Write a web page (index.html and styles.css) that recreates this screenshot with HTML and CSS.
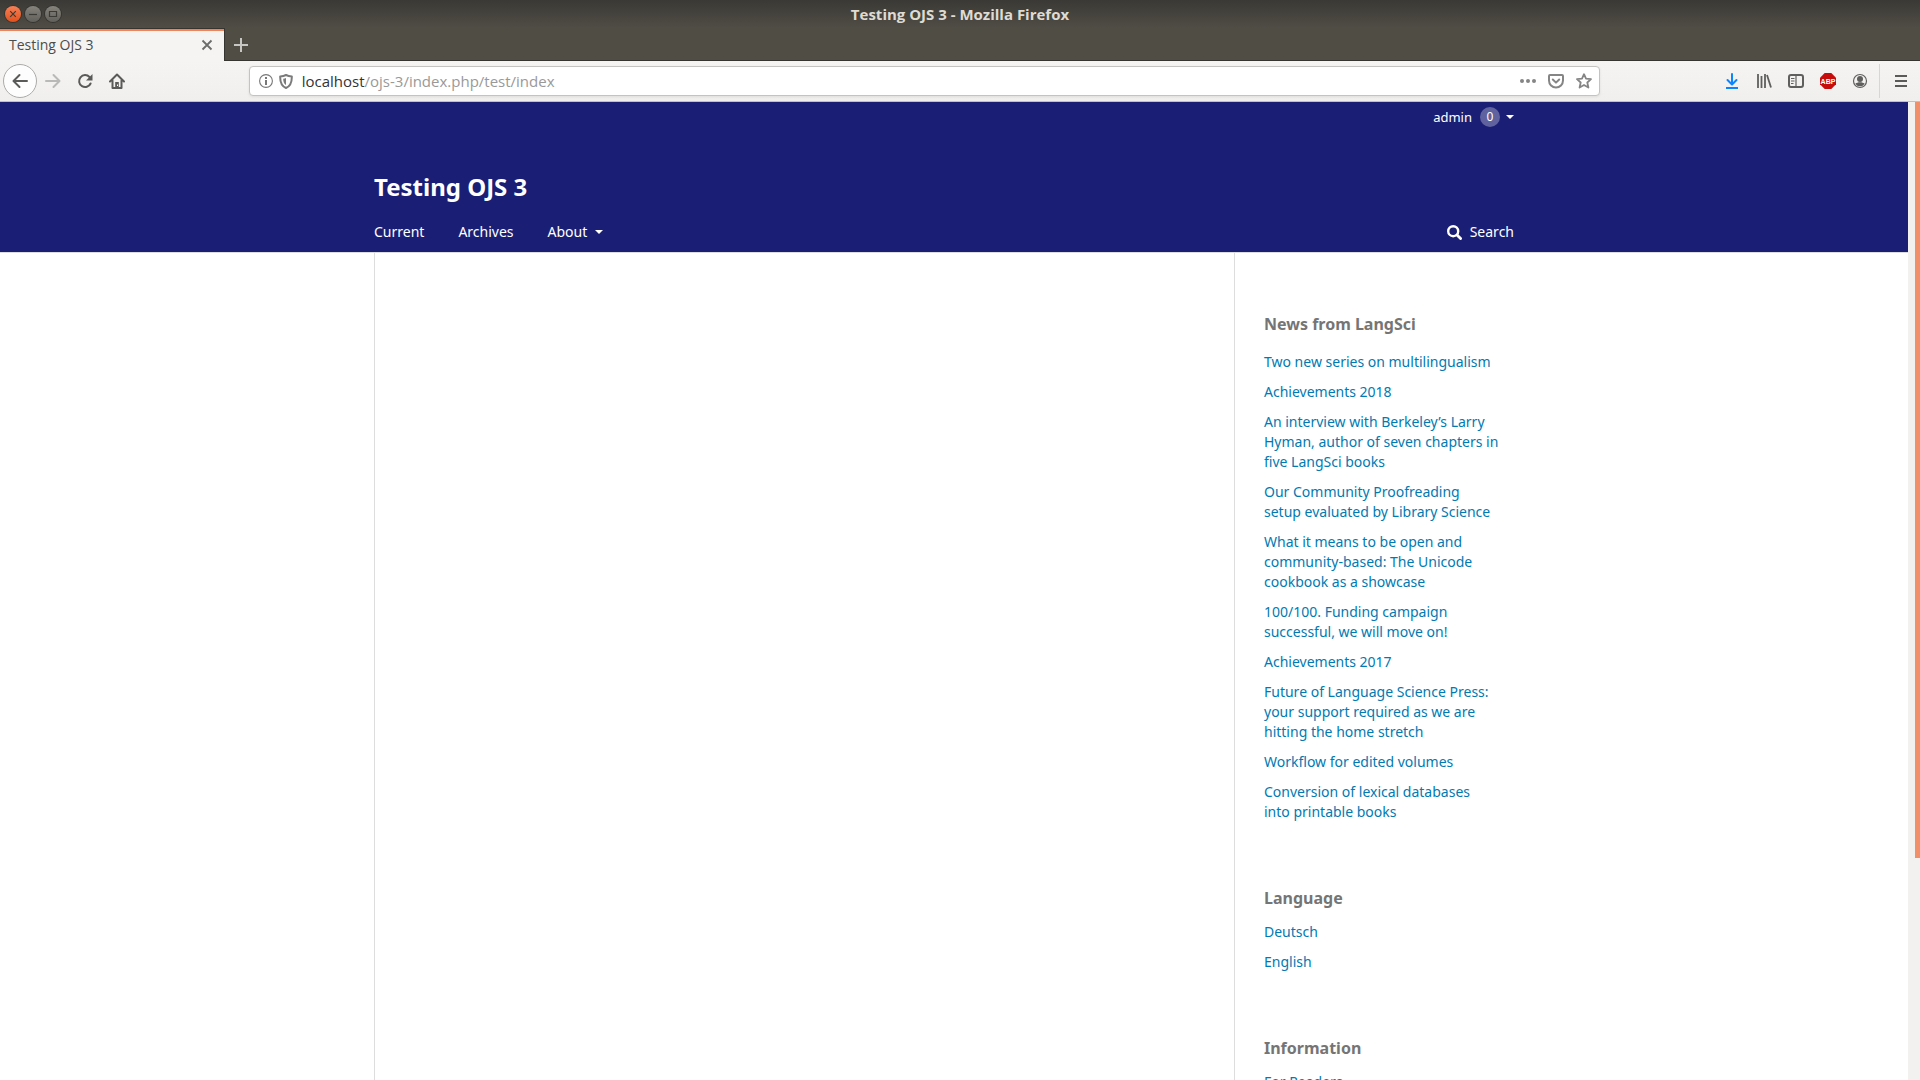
FILE: index.html
```html
<!DOCTYPE html>
<html lang="en">
<head>
<meta charset="utf-8">
<title>Testing OJS 3</title>
<link rel="stylesheet" href="styles.css">
</head>
<body>
<div class="window">
  <header class="titlebar">
    <div class="window-controls">
      <button class="wm wm-close" aria-label="Close window"><svg width="16" height="16" viewBox="0 0 16 16"><path d="M5.2 5.2l5.6 5.6M10.8 5.2l-5.6 5.6"/></svg></button>
      <button class="wm" aria-label="Minimize"><svg width="16" height="16" viewBox="0 0 16 16"><path d="M4 8.5h8"/></svg></button>
      <button class="wm" aria-label="Maximize"><svg width="16" height="16" viewBox="0 0 16 16"><path d="M4.500 5.500h7v5h-7z"/></svg></button>
    </div>
    <span class="window-title">Testing OJS 3 - Mozilla Firefox</span>
  </header>

  <div class="tabs">
    <div class="tab">
      <span>Testing OJS 3</span>
      <button class="tab-close" aria-label="Close tab"><svg width="12" height="12" viewBox="0 0 12 12"><path d="M1.500 1.500l9 9M10.500 1.500l-9 9" stroke="#6c6c6b" stroke-width="1.800"/></svg></button>
    </div>
    <button class="new-tab" aria-label="New tab"><svg width="14" height="14" viewBox="0 0 14 14"><path d="M7 0v14M0 7h14" stroke="#c8c6c2" stroke-width="2"/></svg></button>
  </div>

  <div class="toolbar">
    <button class="back" aria-label="Back"><svg width="16" height="16" viewBox="0 0 16 16"><path d="M15 8H2M7.500 2L1.500 8l6 6" fill="none" stroke="#5a5a59" stroke-width="2" stroke-linecap="round" stroke-linejoin="round"/></svg></button>
    <button class="tool" aria-label="Forward"><svg width="16" height="16" viewBox="0 0 16 16"><path d="M1 8h13M8.500 2l6 6-6 6" fill="none" stroke="#b9b9b7" stroke-width="2" stroke-linecap="round" stroke-linejoin="round"/></svg></button>
    <button class="tool" aria-label="Reload"><svg width="16" height="16" viewBox="0 0 16 16"><path d="M13.600 10.500A6 6 0 1 1 12.500 4" fill="none" stroke="#5a5a59" stroke-width="2" stroke-linecap="round"/><path d="M15.500 1v6.500H9z" fill="#5a5a59"/></svg></button>
    <button class="tool" aria-label="Home"><svg width="16" height="16" viewBox="0 0 16 16"><path d="M1 8.500L8 1.500l7 7M3.500 7.500V15h9V7.500" fill="none" stroke="#5a5a59" stroke-width="2" stroke-linecap="round" stroke-linejoin="round"/><path d="M6.200 9h3.600v6H6.200z" fill="#5a5a59"/><path d="M8 11.500h1V13H8z" fill="#fff"/></svg></button>
    <span class="spacer"></span>
    <div class="urlbar">
      <svg width="14" height="14" viewBox="0 0 14 14"><circle cx="7" cy="7" r="6.400" fill="none" stroke="#777" stroke-width="1.100"/><path d="M6 3h2v2H6zM6 6h2v5H6z" fill="#777"/></svg>
      <svg class="shield" width="14" height="15" viewBox="0 0 14 15"><path d="M7 1C5 2 3 2.300 1.200 2.400 1 8.500 2.500 12 7 14c4.500-2 6-5.500 5.800-11.600C11 2.300 9 2 7 1z" fill="none" stroke="#7b7b7b" stroke-width="2" stroke-linejoin="round"/><path d="M7 4v7C5 9.600 4.200 7.800 4.200 4.700 5.300 4.600 6.200 4.400 7 4z" fill="#7b7b7b"/></svg>
      <a class="address" href="#"><span class="host">localhost</span>/ojs-3/index.php/test/index</a>
      <button class="page-action" aria-label="Page actions"><svg width="16" height="16" viewBox="0 0 16 16" fill="#858585"><circle cx="2" cy="8" r="2"/><circle cx="8" cy="8" r="2"/><circle cx="14" cy="8" r="2"/></svg></button>
      <button class="page-action" aria-label="Save to Pocket"><svg width="16" height="16" viewBox="0 0 16 16" fill="none" stroke="#858585" stroke-width="2" stroke-linecap="round" stroke-linejoin="round"><path d="M2 2h12q1 0 1 1v4.500a7 7 0 0 1-14 0V3q0-1 1-1z"/><path d="M4.800 6.500L8 9.600l3.200-3.100"/></svg></button>
      <button class="page-action" aria-label="Bookmark"><svg width="16" height="16" viewBox="0 0 16 16"><path d="M8 1.200l2 4.500 5 .5-3.700 3.300 1.100 5L8 12l-4.400 2.500 1.100-5L1 6.200l5-.5z" fill="none" stroke="#858585" stroke-width="1.800" stroke-linejoin="round"/></svg></button>
    </div>
    <span class="spacer"></span>
    <button class="tool" aria-label="Downloads"><svg width="16" height="16" viewBox="0 0 16 16"><path d="M8 1v10M3.500 7L8 11.500 12.500 7" fill="none" stroke="#0a84ff" stroke-width="2" stroke-linecap="round" stroke-linejoin="round"/><path d="M2 14h12v2H2z" fill="#0a84ff"/></svg></button>
    <button class="tool" aria-label="Library"><svg width="16" height="16" viewBox="0 0 16 16"><path d="M2 1v14M5.500 3v12M9 1v14M11 2l4 12.500" fill="none" stroke="#5f5f5e" stroke-width="1.800"/></svg></button>
    <button class="tool" aria-label="Sidebars"><svg width="16" height="16" viewBox="0 0 16 16"><rect x="1" y="2" width="14" height="12" rx="2" fill="none" stroke="#5f5f5e" stroke-width="2"/><path d="M8 2v12M3 5.500h3.500M3 8h3.500M3 10.500h2.500" stroke="#5f5f5e" stroke-width="1.200"/></svg></button>
    <button class="tool" aria-label="Adblock Plus"><svg width="16" height="16" viewBox="0 0 16 16"><path d="M4.700 0h6.600L16 4.700v6.600L11.300 16H4.700L0 11.300V4.700z" fill="#c70d0c"/><text class="abp" x="8" y="11" text-anchor="middle">ABP</text></svg></button>
    <button class="tool" aria-label="Account"><svg width="16" height="16" viewBox="0 0 16 16"><circle cx="8" cy="8" r="6.500" fill="none" stroke="#5f5f5e" stroke-width="1.200"/><circle cx="8" cy="6" r="3" fill="#5f5f5e"/><path d="M3.300 10.500C5 9.500 6 9.500 6.500 9.200h3c.5.300 1.500.3 3.200 1.300C11.500 12.500 10 13.300 8 13.300s-3.500-.8-4.700-2.800z" fill="#5f5f5e"/></svg></button>
    <span class="separator"></span>
    <button class="tool" aria-label="Menu"><svg width="12" height="12" viewBox="0 0 12 12"><path d="M0 1h12M0 6h12M0 11h12" stroke="#5a5a59" stroke-width="2"/></svg></button>
  </div>

  <div class="viewport">
    <div class="page">
      <header class="site-header">
        <div class="wrap">
          <nav class="user-nav" aria-label="User">
            <a href="#">admin <span class="badge">0</span><span class="caret"></span></a>
          </nav>
          <h1 class="site-name"><a href="#">Testing OJS 3</a></h1>
          <nav class="main-nav" aria-label="Site">
            <a href="#">Current</a>
            <a href="#">Archives</a>
            <a href="#">About <span class="caret"></span></a>
            <a class="search" href="#"><svg width="15" height="15" viewBox="0 0 15 15"><circle cx="6.200" cy="6.200" r="5" fill="none" stroke="#fff" stroke-width="2.400"/><path d="M10 10l3.600 3.600" stroke="#fff" stroke-width="2.800" stroke-linecap="round"/></svg>Search</a>
          </nav>
        </div>
      </header>
      <div class="wrap content">
        <main class="main"></main>
        <aside class="sidebar">
          <section class="block news">
            <h2>News from LangSci</h2>
            <ul>
              <li><a href="#">Two new series on multilingualism</a></li>
              <li><a href="#">Achievements 2018</a></li>
              <li><a href="#">An interview with Berkeley’s Larry Hyman, author of seven chapters in five LangSci books</a></li>
              <li><a href="#">Our Community Proofreading<br>setup evaluated by Library Science</a></li>
              <li><a href="#">What it means to be open and community-based: The Unicode cookbook as a showcase</a></li>
              <li><a href="#">100/100. Funding campaign successful, we will move on!</a></li>
              <li><a href="#">Achievements 2017</a></li>
              <li><a href="#">Future of Language Science Press: your support required as we are hitting the home stretch</a></li>
              <li><a href="#">Workflow for edited volumes</a></li>
              <li><a href="#">Conversion of lexical databases<br>into printable books</a></li>
            </ul>
          </section>
          <section class="block">
            <h2>Language</h2>
            <ul>
              <li><a href="#">Deutsch</a></li>
              <li><a href="#">English</a></li>
            </ul>
          </section>
          <section class="block">
            <h2>Information</h2>
            <ul>
              <li><a href="#">For Readers</a></li>
            </ul>
          </section>
        </aside>
      </div>
    </div>
    <div class="scrollbar"><div class="thumb"></div></div>
  </div>
</div>
</body>
</html>
```
FILE: styles.css
```css
* { box-sizing: border-box; }

body {
  margin: 0;
  font-family: "Noto Sans", sans-serif;
  font-size: 14px;
  line-height: 20px;
}

button {
  display: flex;
  align-items: center;
  justify-content: center;
  padding: 0;
  border: 0;
  background: none;
}

a { text-decoration: none; }

.window {
  display: flex;
  flex-direction: column;
  height: 100vh;
  overflow: hidden;
}

/* Window title */
.titlebar {
  display: grid;
  grid-template-columns: 1fr auto 1fr;
  align-items: center;
  flex: none;
  height: 28px;
  padding: 0 5px;
  background: linear-gradient(#3a3935, #504d45);
}

.window-controls { display: flex; gap: 4px; }

.wm {
  width: 16px;
  height: 16px;
  border-radius: 50%;
  background: linear-gradient(#85837c, #62605a);
  box-shadow: 0 0 0 1px #35342f;
}

.wm-close { background: linear-gradient(#f58057, #e2511c); }

.wm path { fill: none; stroke: #3b3a35; stroke-width: 1.2; }

.window-title {
  color: #dfdbd2;
  font-family: "Open Sans", sans-serif;
  font-size: 15px;
  font-weight: 700;
}

/* Tab strip */
.tabs {
  display: flex;
  flex: none;
  height: 33px;
  background: #504d45;
  box-shadow: inset 0 -1px #37352f;
}

.tab {
  display: flex;
  align-items: center;
  justify-content: space-between;
  width: 225px;
  padding: 0 11px 0 9px;
  border-top: 1px solid #37352f;
  border-right: 1px solid #37352f;
  background: #f5f4f2;
  box-shadow: inset 0 2px #f0835a;
  color: #4c4c4c;
  font-family: "Open Sans", sans-serif;
}

.new-tab { width: 32px; }

/* Navigation toolbar */
.toolbar {
  display: flex;
  align-items: center;
  flex: none;
  height: 41px;
  padding: 0 3px;
  border-bottom: 1px solid #c3c1bf;
  background: linear-gradient(#f5f4f2, #f0efed);
}

.tool { flex: none; width: 32px; height: 32px; }

.back {
  flex: none;
  width: 34px;
  height: 34px;
  border: 1px solid #acaba9;
  border-radius: 50%;
  background: #fdfdfd;
}

.spacer { flex: 117; }

.urlbar {
  display: flex;
  align-items: center;
  flex: 1348;
  height: 30px;
  padding: 0 8px 0 9px;
  border: 1px solid #c4c3c1;
  border-radius: 4px;
  background: #fff;
  box-shadow: 0 1px 3px rgba(0, 0, 0, .08);
}

.shield { margin: 0 9px 0 6px; }

.address {
  flex: 1;
  color: #999;
  font-family: "Open Sans", sans-serif;
  font-size: 15px;
}

.host { color: #333; }

.page-action { width: 28px; height: 28px; }
.page-action:last-child { margin-right: -7px; }

.abp {
  fill: #fff;
  font-family: "Liberation Sans", sans-serif;
  font-size: 7px;
  font-weight: 700;
}

.separator {
  width: 1px;
  height: 34px;
  margin: 0 5px 0 3px;
  background: #d7d6d4;
}

/* Page area */
.viewport {
  display: flex;
  flex: 1;
  min-height: 0;
}

.page {
  display: flex;
  flex-direction: column;
  flex: 1;
  overflow: hidden;
  background: #fff;
}

.scrollbar {
  flex: none;
  width: 12px;
  padding-left: 7px;
  background: #f2f1f0;
}

.thumb {
  height: 77.3%;
  background: #f28e68;
}

.wrap {
  width: 100%;
  max-width: 1160px;
  margin: 0 auto;
}

.site-header {
  flex: none;
  border-bottom: 1px solid #ddd;
  background: #1a1f75;
}

.site-header a {
  display: flex;
  align-items: center;
  color: #fff;
}

.user-nav {
  display: flex;
  justify-content: flex-end;
  padding: 5px 20px 0;
  font-size: 13px;
}

.badge {
  width: 20px;
  margin: 0 6px 0 8px;
  border-radius: 50%;
  background: rgba(255, 255, 255, .3);
  font-size: 12px;
  line-height: 20px;
  text-align: center;
}

.caret {
  border: 4px solid transparent;
  border-top-color: #fff;
  border-bottom: 0;
}

.site-name {
  margin: 0;
  padding-top: 45px;
  font-size: 24px;
  line-height: 30px;
}

.main-nav {
  display: flex;
  gap: 34px;
  padding: 20px 20px 10px 0;
}

.main-nav .caret { margin-left: 8px; }
.search { gap: 8px; margin-left: auto; }

.content {
  display: flex;
  flex: 1;
  flex-shrink: 0;
}

.main {
  flex: 1;
  border-left: 1px solid #ddd;
}

.sidebar {
  width: 300px;
  border-left: 1px solid #ddd;
}

.block { padding: 30px 29px 31px; }
.news { padding-top: 61px; }

.block h2 {
  margin: 0;
  color: #757575;
  font-size: 16px;
  line-height: 20px;
}

.block ul {
  margin: 0;
  padding: 9px 0 0;
  list-style: none;
}

.news ul { padding-top: 13px; }

.block li { padding: 5px 0; }
.block a { color: #007ab2; }
```
